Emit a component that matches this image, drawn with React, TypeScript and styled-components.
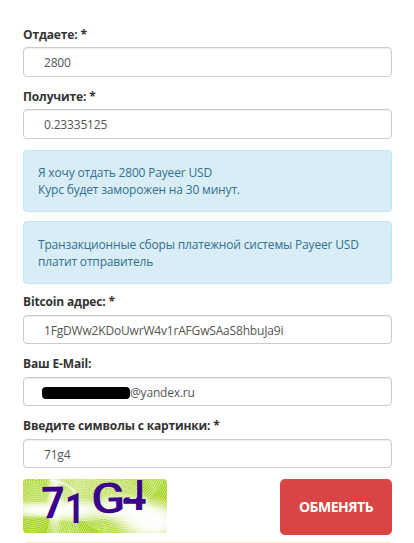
import React from "react";
import styled, { createGlobalStyle } from "styled-components";

const GlobalStyle = createGlobalStyle`
  * { box-sizing: border-box; }
  body {
    margin: 0;
    background: #fff;
    font-family: "Open Sans", "Noto Sans", sans-serif;
    font-size: 12px;
    line-height: 17px;
    color: #333;
    overflow: hidden;
  }
`;

const Form = styled.form`
  width: 414px;
  height: 543px;
  padding: 26px 22px 0 23px;
  overflow: hidden;
`;

const Field = styled.div<{ $compact?: boolean }>`
  display: flex;
  flex-direction: column;
  gap: ${(p) => (p.$compact ? 5 : 4)}px;
  margin-bottom: 11px;
`;

const Label = styled.label`
  height: 17px;
  font-weight: 700;
  letter-spacing: -0.15px;
  color: #333;
`;

const Control = styled.div<{ $compact?: boolean }>`
  display: flex;
  align-items: flex-start;
  height: ${(p) => (p.$compact ? 29 : 30)}px;
  padding: 6px 20px 0;
  border: 1px solid #ccc;
  border-radius: 4px;
  box-shadow: inset 0 1px 1px rgba(0, 0, 0, 0.075);
  color: #555;
  letter-spacing: -0.18px;
  white-space: nowrap;
`;

const Redaction = styled.span`
  flex: none;
  width: 88px;
  height: 12px;
  margin: 3px 0 0 -2px;
  border-radius: 4px;
  background: #000;
`;

const Notice = styled.div<{ $height: number; $top: number }>`
  height: ${(p) => p.$height}px;
  margin-bottom: 9px;
  padding: ${(p) => p.$top}px 14px 0;
  border: 1px solid #bce8f1;
  border-radius: 4px;
  background: #d9edf7;
  color: #31708f;
  letter-spacing: -0.17px;
`;

const Actions = styled.div`
  display: flex;
  justify-content: space-between;
  align-items: flex-start;
  height: 63px;
`;

const CaptchaImage = styled.svg`
  display: block;
  width: 144px;
  height: 54px;
  overflow: visible;
`;

const Submit = styled.button`
  width: 112px;
  height: 56px;
  padding: 0;
  border: 0;
  border-radius: 5px;
  background: #d94544;
  color: #fff;
  font: 700 14px/20px "Open Sans", sans-serif;
  letter-spacing: -0.5px;
`;

const NextPanel = styled.div`
  height: 10px;
  border: 1px solid #faebcc;
  border-radius: 4px;
  background: #fcf8e3;
`;

const ringCenters = [
  { x: 13, y: 2, rx: 1.5, ry: 1.1, n: 20 },
  { x: 10, y: 58, rx: 1.6, ry: 1.2, n: 18 },
  { x: 80, y: 66, rx: 1.1, ry: 1.4, n: 32 },
  { x: 103, y: -8, rx: 1.2, ry: 1.2, n: 34 },
  { x: 57, y: -16, rx: 1.5, ry: 1, n: 36 },
];

const Captcha = () => (
  <CaptchaImage viewBox="0 0 144 54">
    <defs>
      <radialGradient id="glow">
        <stop offset="0" stopColor="#fff" />
        <stop offset="0.35" stopColor="#fff" stopOpacity="0.85" />
        <stop offset="1" stopColor="#fff" stopOpacity="0" />
      </radialGradient>
      <clipPath id="frame">
        <rect width="144" height="54" rx="4" />
      </clipPath>
      <clipPath id="fourParts">
        <path d="M99 18.4H114.2V-4H126V36H99Z" />
      </clipPath>
    </defs>
    <g clipPath="url(#frame)">
      <rect width="144" height="54" fill="#9ed00f" />
      <g fill="none" stroke="#fff" strokeWidth="0.8" opacity="0.65">
        {ringCenters.map((c, i) =>
          Array.from({ length: c.n }, (_, k) => (
            <ellipse key={`${i}-${k}`} cx={c.x} cy={c.y} rx={(k + 1) * c.rx * 1.6} ry={(k + 1) * c.ry * 1.6} />
          )),
        )}
      </g>
      <g fill="url(#glow)">
        <ellipse cx="14" cy="31" rx="34" ry="9" />
        <ellipse cx="50" cy="31" rx="42" ry="13" />
        <ellipse cx="123" cy="37" rx="42" ry="21" />
        <ellipse cx="134" cy="45" rx="36" ry="19" />
        <ellipse cx="98" cy="29" rx="35" ry="16" />
        <ellipse cx="32" cy="20" rx="9" ry="40" />
      </g>
      <path d="M27 1Q43 3 51 12T35 34" fill="none" stroke="#fff" strokeWidth="2" opacity="0.65" />
    </g>
    <g fill="#3b008c" fontFamily="Roboto, sans-serif" fontWeight="700" letterSpacing="0">
      <text transform="translate(18.7 39.3) rotate(-1) scale(0.93 1)" fontSize="44">7</text>
      <text transform="translate(42 44.3) scale(0.8 1)" fontSize="43">1</text>
      <text transform="translate(68.6 34.5) rotate(-2) scale(1.2 1)" fontSize="42" fontWeight="500">G</text>
      <g clipPath="url(#fourParts)">
        <text transform="translate(99 30.5)" fontSize="43">4</text>
      </g>
    </g>
  </CaptchaImage>
);

export default function App() {
  return (
    <>
      <GlobalStyle />
      <Form>
        <Field>
          <Label>Отдаете: *</Label>
          <Control>2800</Control>
        </Field>
        <Field>
          <Label>Получите: *</Label>
          <Control>0.23335125</Control>
        </Field>
        <Notice $height={62} $top={13}>
          Я хочу отдать 2800 Payeer USD
          <br />
          Курс будет заморожен на 30 минут.
        </Notice>
        <Notice $height={63} $top={14}>
          Транзакционные сборы платежной системы Payeer USD
          <br />
          платит отправитель
        </Notice>
        <Field $compact>
          <Label>Bitcoin адрес: *</Label>
          <Control $compact>1FgDWw2KDoUwrW4v1rAFGwSAaS8hbuJa9i</Control>
        </Field>
        <Field $compact>
          <Label>Ваш E-Mail:</Label>
          <Control $compact>
            <Redaction />
            @yandex.ru
          </Control>
        </Field>
        <Field $compact>
          <Label>Введите символы с картинки: *</Label>
          <Control $compact>71g4</Control>
        </Field>
        <Actions>
          <Captcha />
          <Submit type="button">ОБМЕНЯТЬ</Submit>
        </Actions>
        <NextPanel />
      </Form>
    </>
  );
}
